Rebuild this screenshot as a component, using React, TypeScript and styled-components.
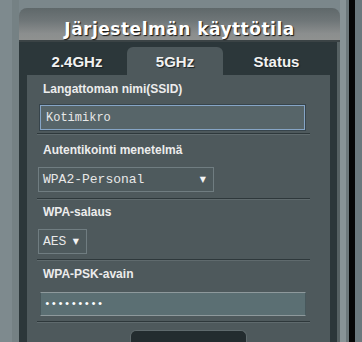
import styled, { createGlobalStyle } from 'styled-components';

const GlobalStyle = createGlobalStyle`
  html, body {
    margin: 0;
    padding: 0;
    background: #7b878b;
  }
  body {
    font-family: "Liberation Sans", Arial, sans-serif;
  }
`;

const App = () => {
  return (
    <>
      <GlobalStyle />
      <Page>
        <Stage>
          <Panel>
            <TitleBar>Järjestelmän käyttötila</TitleBar>
            <TabRow>
              <Tab>2.4GHz</Tab>
              <Tab $active>5GHz</Tab>
              <Tab>Status</Tab>
            </TabRow>
            <Body>
              <Content>
                <Section $top={7}>
                  <Label>Langattoman nimi(SSID)</Label>
                  <Control $gap={9}>
                    <SsidInput defaultValue="Kotimikro" />
                  </Control>
                  <Separator $after={3} />
                </Section>

                <Section $top={8}>
                  <Label>Autentikointi menetelmä</Label>
                  <Control $gap={10}>
                    <SelectBox $width={176}>
                      WPA2-Personal
                      <Arrow>▼</Arrow>
                    </SelectBox>
                  </Control>
                  <Separator $after={6} />
                </Section>

                <Section $top={5}>
                  <Label>WPA-salaus</Label>
                  <Control $gap={10}>
                    <SelectBox $width={49}>
                      AES
                      <Arrow>▼</Arrow>
                    </SelectBox>
                  </Control>
                  <Separator $after={5} />
                </Section>

                <Section $top={6}>
                  <Label>WPA-PSK-avain</Label>
                  <Control $gap={11}>
                    <KeyInput type="password" defaultValue="salasana1" />
                  </Control>
                  <Separator $after={5} />
                </Section>

                <ApplyButton>Käytä</ApplyButton>
              </Content>
            </Body>
          </Panel>
        </Stage>
        <Edge />
        <EdgeRest />
      </Page>
    </>
  );
};

const Page = styled.div`
  display: flex;
  width: 362px;
  height: 342px;
  overflow: hidden;
`;

const Stage = styled.div`
  width: 349px;
  height: 342px;
  box-sizing: border-box;
  padding: 8px 9px 0 19px;
  background: linear-gradient(
    to right,
    #7e8a8e 0, #7e8a8e 12px,
    #758184 12px, #758184 19px,
    #7b878b 19px, #7b878b 340px,
    #889396 340px, #889396 346px,
    #6c777a 346px
  );
`;

const Panel = styled.div`
  width: 321px;
  height: 100%;
  display: flex;
  flex-direction: column;
`;

const TitleBar = styled.div`
  height: 34px;
  box-sizing: border-box;
  padding-top: 11px;
  border-radius: 8px 8px 0 0;
  border-bottom: 2px solid #3b4345;
  background: linear-gradient(to bottom, #5f686a 0%, #6f7678 40%, #8b8e8e 80%, #8f9190 100%);
  color: #ffffff;
  font-family: "DejaVu Sans", Verdana, sans-serif;
  font-weight: bold;
  font-size: 17px;
  line-height: 20px;
  letter-spacing: 0.5px;
  text-align: center;
  text-shadow: 1px 1px 1px #111;
`;

const TabRow = styled.div`
  height: 33px;
  box-sizing: border-box;
  display: grid;
  grid-template-columns: 100px 96px 1fr;
  padding: 5px 10px 0 8px;
  background: linear-gradient(to right, #2c373a 0, #2c373a 318px, #566163 318px);
`;

const Tab = styled.div<{ $active?: boolean }>`
  padding-top: 1px;
  border-radius: 6px 6px 0 0;
  background: ${props => (props.$active ? '#4e595c' : 'transparent')};
  color: #f2f2f2;
  font-size: 15px;
  font-weight: bold;
  line-height: 27px;
  text-align: center;
  text-shadow: 1px 1px 1px #1a2224;
`;

const Body = styled.div`
  flex: 1;
  display: flex;
  padding: 0 10px 0 8px;
  background: linear-gradient(to right, #2c373a 0, #2c373a 318px, #566163 318px);
  min-height: 0;
`;

const Content = styled.div`
  flex: 1;
  display: flex;
  flex-direction: column;
  background: #4e595c;
  overflow: hidden;
`;

const Section = styled.div<{ $top: number }>`
  display: flex;
  flex-direction: column;
  align-items: flex-start;
  padding-top: ${props => props.$top}px;
`;

const Label = styled.div`
  margin-left: 16px;
  color: #ececec;
  font-size: 12px;
  font-weight: bold;
  line-height: 14px;
`;

const Control = styled.div<{ $gap: number }>`
  margin-top: ${props => props.$gap}px;
`;

const SsidInput = styled.input`
  display: block;
  margin-left: 13px;
  width: 265px;
  height: 25px;
  box-sizing: border-box;
  padding: 0 5px;
  border: 1px solid #86a5c6;
  box-shadow: 0 0 0 1px #37444b;
  background: #576569;
  color: #e8e8e8;
  font-family: "Liberation Mono", "Courier New", monospace;
  font-size: 12px;
  outline: none;
`;

const KeyInput = styled.input`
  display: block;
  margin-left: 13px;
  width: 266px;
  height: 24px;
  box-sizing: border-box;
  padding: 0 3px;
  border: 1px solid #48585c;
  border-top-color: #8e999c;
  border-bottom-color: #8e999c;
  background: #5b6f73;
  color: #ffffff;
  font-family: "Liberation Mono", "Courier New", monospace;
  font-size: 11px;
  outline: none;
`;

const SelectBox = styled.div<{ $width: number }>`
  display: flex;
  align-items: center;
  justify-content: space-between;
  margin-left: 11px;
  width: ${props => props.$width}px;
  height: 25px;
  box-sizing: border-box;
  padding: 0 7px 0 4px;
  border: 1px solid #707d81;
  background: #4e5a5d;
  color: #e8e8e8;
  font-family: "Liberation Mono", "Courier New", monospace;
  font-size: 13px;
`;

const Arrow = styled.span`
  font-family: "DejaVu Sans", sans-serif;
  font-size: 8px;
  color: #f4f4f4;
`;

const Separator = styled.div<{ $after: number }>`
  margin: ${props => props.$after}px 0 0 10px;
  width: 273px;
  border-top: 1px solid #2e383b;
  border-bottom: 1px solid #5f6a6d;
`;

const ApplyButton = styled.button`
  flex-shrink: 0;
  align-self: flex-start;
  margin: 7px 0 0 103px;
  width: 117px;
  height: 30px;
  box-sizing: border-box;
  padding: 6px 0 0;
  border: 1px solid #5f6a6d;
  border-bottom: none;
  border-radius: 6px 6px 0 0;
  background: #232c2f;
  color: #ffffff;
  font-family: "Liberation Sans", Arial, sans-serif;
  font-size: 14px;
  font-weight: bold;
  line-height: 16px;
  text-align: center;
`;

const Edge = styled.div`
  width: 6px;
  height: 342px;
  background: #060606;
`;

const EdgeRest = styled.div`
  flex: 1;
  height: 342px;
  background: #6b787d;
`;

export default App;
